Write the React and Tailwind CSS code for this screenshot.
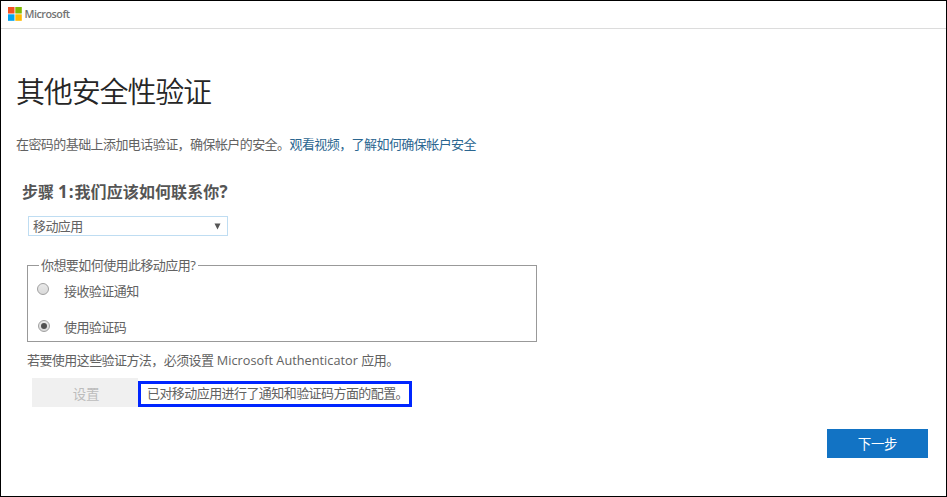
function MicrosoftLogo() {
  return (
    <svg width="14" height="14" viewBox="0 0 14 14" className="shrink-0">
      <rect x="0" y="0" width="6.5" height="6.5" fill="#f25022" />
      <rect x="7.3" y="0" width="6.5" height="6.5" fill="#7fba00" />
      <rect x="0" y="7.3" width="6.5" height="6.5" fill="#00a4ef" />
      <rect x="7.3" y="7.3" width="6.5" height="6.5" fill="#ffb900" />
    </svg>
  );
}

function Radio({ checked }) {
  return (
    <span className="flex size-3 shrink-0 items-center justify-center rounded-full border border-[#a0a0a0] bg-linear-to-b from-[#e9e9e9] to-[#dadada]">
      {checked && <span className="size-1.5 rounded-full bg-[#505050]" />}
    </span>
  );
}

export default function App() {
  return (
    <div className="flex h-[497px] w-[947px] flex-col border border-black bg-white font-['Noto_Sans_CJK_SC',sans-serif] text-[13px] leading-5 tracking-[-0.57px] whitespace-nowrap text-[#626262]">
      <header className="flex h-7 shrink-0 items-center border-b border-[#dcdcdc] pb-px pl-[7px]">
        <MicrosoftLogo />
        <span className="ml-[2.5px] font-['Open_Sans',sans-serif] text-[10.8px] font-semibold tracking-[-0.5px] text-[#737373]">Microsoft</span>
      </header>

      <main className="flex flex-1 flex-col items-start">
        <h1 className="mt-[41px] ml-[15px] h-10 text-[29px] leading-10 font-[350] tracking-[-1.15px] text-[#262626]">其他安全性验证</h1>
        <p className="mt-[24px] ml-[15px] h-5">
          在密码的基础上添加电话验证，确保帐户的安全。
          <a className="text-[#2b6690]">观看视频，了解如何确保帐户安全</a>
        </p>
        <h2 className="mt-[25px] ml-[21px] h-6 text-base leading-6 font-bold tracking-[0.1px] text-[#555]">
          步骤 <span className="font-['Open_Sans',sans-serif] text-[17px] tracking-[1px]">1:</span>我们应该如何联系你<span className="font-['Open_Sans',sans-serif] text-[17px]">?</span>
        </h2>
        <div className="mt-[13px] ml-[27px] flex h-5 w-[200px] items-center justify-between border border-[#bfddf2] pr-1.5 pl-1">
          <span>移动应用</span>
          <svg width="7" height="7" viewBox="0 0 7 7">
            <path d="M0.5 0.5H6.5L3.5 6.5Z" fill="#555" />
          </svg>
        </div>

        <fieldset className="mt-[19px] ml-[26px] h-[87px] w-[510px] border border-[#999] pl-[9px]">
          <legend className="ml-[2px] h-5 pr-[3px] pl-[2px]">
            你想要如何使用此移动应用<span className="font-['Open_Sans',sans-serif]">?</span>
          </legend>
          <div className="flex h-5 items-start">
            <div className="mt-[8px]"><Radio /></div>
            <span className="mt-[6px] ml-[15px]">接收验证通知</span>
          </div>
          <div className="mt-4 flex h-5 items-start pl-px">
            <div className="mt-[9px]"><Radio checked /></div>
            <span className="mt-[6px] ml-[14px]">使用验证码</span>
          </div>
        </fieldset>

        <p className="mt-[8px] ml-[26px] h-5">
          若要使用这些验证方法，必须设置<span className="font-['Open_Sans',sans-serif] text-[12.7px] tracking-[0.03px]"> Microsoft Authenticator </span>应用。
        </p>
        <div className="mt-[8px] ml-[31px] flex items-start">
          <div className="flex h-[29px] w-[106px] items-center justify-center bg-[#f0f0f0] pl-0.5 text-[13.5px] tracking-[-0.2px] text-[#bcbcbc]">设置</div>
          <div className="mt-[3px] flex h-[26px] w-[274px] items-center border-3 border-[#0026ff] pb-0.5 pl-1.5">已对移动应用进行了通知和验证码方面的配置。</div>
        </div>
        <button className="mt-[22px] mr-[18px] h-[29px] w-[101px] self-end bg-[#1273c4] pb-px text-[13.5px] tracking-[-0.3px] text-white">下一步</button>
      </main>
    </div>
  );
}
